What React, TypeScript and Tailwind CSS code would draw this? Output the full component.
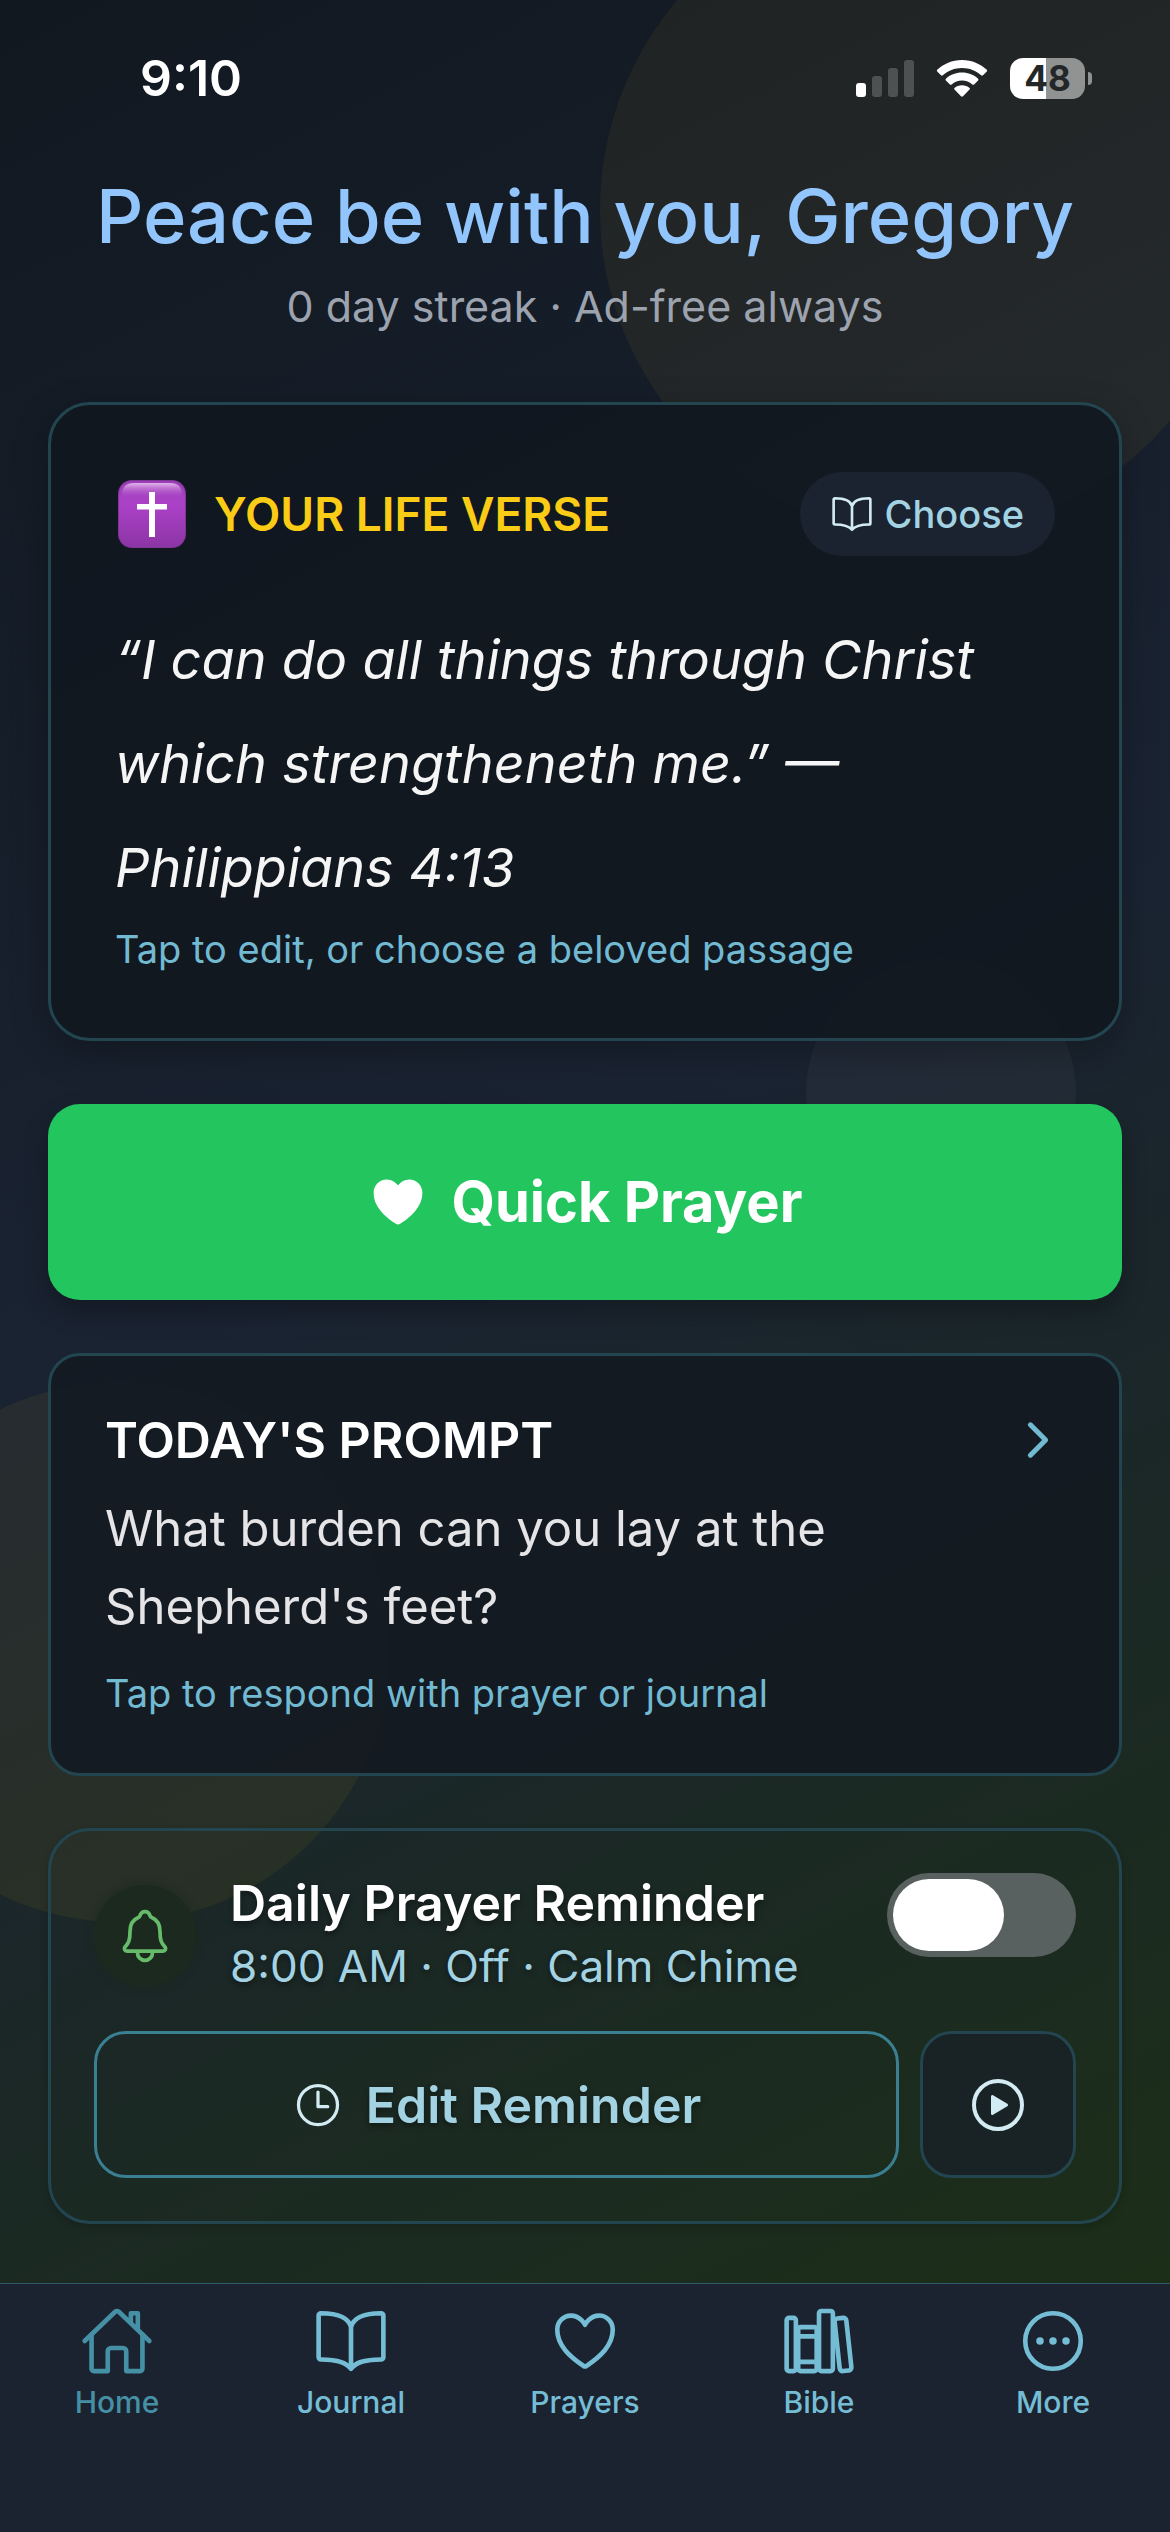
import { useState } from "react";
import type { IconType } from "react-icons";
import {
  IoBookOutline,
  IoChevronForward,
  IoEllipsisHorizontalCircleOutline,
  IoHeart,
  IoHeartOutline,
  IoHomeOutline,
  IoLibraryOutline,
  IoNotificationsOutline,
  IoPlayCircleOutline,
  IoTimeOutline,
} from "react-icons/io5";

interface Tab {
  label: string;
  icon: IconType;
}

const tabs: Tab[] = [
  { label: "Home", icon: IoHomeOutline },
  { label: "Journal", icon: IoBookOutline },
  { label: "Prayers", icon: IoHeartOutline },
  { label: "Bible", icon: IoLibraryOutline },
  { label: "More", icon: IoEllipsisHorizontalCircleOutline },
];

function StatusBar() {
  return (
    <div className="flex h-[156px] items-center justify-between pl-[140px] pr-[78px]">
      <span className="text-[50px] font-semibold leading-none text-white">9:10</span>
      <div className="flex items-center gap-[22px]">
        {/* Signal */}
        <svg viewBox="0 0 58 38" className="h-[38px] w-[58px]" aria-hidden="true">
          <rect x="0" y="24" width="10" height="14" rx="3" fill="#fff" />
          <rect x="16" y="17" width="10" height="21" rx="3" fill="#4d5152" />
          <rect x="32" y="9" width="10" height="29" rx="3" fill="#4d5152" />
          <rect x="48" y="1" width="10" height="37" rx="3" fill="#4d5152" />
        </svg>
        {/* Wi-Fi */}
        <svg viewBox="0 0 52 38" className="h-[38px] w-[52px]" aria-hidden="true" fill="#fff">
          <path d="M26 1C16 1 7.500 5 1.200 10.800Q.4 11.600 1.200 12.500L5 16.300Q5.900 17.100 6.800 16.300C12 11.600 18.600 8.900 26 8.900S40 11.600 45.200 16.300Q46.100 17.100 47 16.300L50.800 12.500Q51.600 11.600 50.800 10.800C44.500 5 36 1 26 1Z" />
          <path d="M26 13.600C19.600 13.600 14 16 9.900 19.700Q9 20.600 9.900 21.500L13.900 25.400Q14.800 26.200 15.700 25.400C18.500 23 22 21.500 26 21.500S33.500 23 36.300 25.400Q37.200 26.200 38.100 25.400L42.100 21.500Q43 20.600 42.100 19.700C38 16 32.400 13.600 26 13.600Z" />
          <path d="M26 26.200C23 26.200 20.400 27.200 18.500 28.900Q17.700 29.800 18.500 30.600L25 37.300Q26 38.200 27 37.300L33.500 30.600Q34.300 29.800 33.500 28.900C31.600 27.200 29 26.200 26 26.200Z" />
        </svg>
        {/* Battery */}
        <div className="flex items-center gap-[3px]">
          <div className="flex h-[41px] w-[75px] items-center justify-center rounded-[13px] bg-linear-to-r from-white from-48% to-[#919393] to-48%">
            <span className="text-[35px] font-bold leading-none text-[#232728]">48</span>
          </div>
          <div className="h-[13px] w-1 rounded-r-full bg-[#919393]" />
        </div>
      </div>
    </div>
  );
}

function CrossBadge() {
  return (
    <svg viewBox="0 0 68 68" className="size-[68px]" aria-hidden="true">
      <defs>
        <linearGradient id="badge" x1="0" y1="0" x2="0" y2="1">
          <stop offset="0" stopColor="#9a3fb5" />
          <stop offset="0.35" stopColor="#ac41c8" />
          <stop offset="1" stopColor="#8c35a5" />
        </linearGradient>
        <linearGradient id="shine" x1="0" y1="0" x2="0" y2="1">
          <stop offset="0" stopColor="#e3b5ec" />
          <stop offset="1" stopColor="#b04acb" stopOpacity="0" />
        </linearGradient>
      </defs>
      <rect width="68" height="68" rx="14" fill="#7f3496" />
      <rect x="1" y="1" width="66" height="66" rx="13" fill="url(#badge)" />
      <path d="M4 18V15Q4 3 16 3H52Q64 3 64 15V18Z" fill="url(#shine)" />
      <path d="M31 12H37V24H49V29.500H37V57H31V29.500H19V24H31Z" fill="#fff" />
    </svg>
  );
}

export default function App() {
  const [activeTab, setActiveTab] = useState("Home");
  const [reminderOn, setReminderOn] = useState(false);

  return (
    <div className="flex min-h-screen flex-col bg-[#1b2331] font-['Inter','Liberation_Sans',sans-serif]">
      <main className="relative isolate flex-1 overflow-hidden bg-[linear-gradient(153deg,#111820_0%,#1a2332_50%,#1c2e18_100%)] pb-[59px]">
        {/* Background circles */}
        <div className="absolute -top-[114px] left-[600px] -z-10 size-[648px] rounded-full bg-[#fbbf24]/6" />
        <div className="absolute left-[806px] top-[958px] -z-10 size-[270px] rounded-full bg-[#ffe4e6]/4" />
        <div className="absolute -left-[151px] top-[1382px] -z-10 size-[540px] rounded-full bg-[#facc15]/6" />

        <StatusBar />

        <header className="pt-4 text-center">
          <h1 className="text-[74px] font-medium leading-[88px] text-[#93c5fd]">Peace be with you, Gregory</h1>
          <p className="mt-4 text-[43px] leading-[60px] text-[#9ca3af]">0 day streak · Ad-free always</p>
        </header>

        <div className="mt-[66px] flex flex-col px-12">
          {/* Life verse */}
          <section className="rounded-[42px] border-3 border-[#22454f] bg-[#11171f]/90 px-16 pb-[62px] pt-[67px] shadow-[0_12px_36px_rgba(0,0,0,0.25)]">
            <div className="flex items-center justify-between">
              <div className="flex items-center gap-[28px] pl-[3px]">
                <CrossBadge />
                <h2 className="text-[46px] font-semibold leading-[60px] text-[#facc15]">YOUR LIFE VERSE</h2>
              </div>
              <button type="button" className="flex h-[84px] items-center gap-[12px] rounded-[42px] bg-[#1b2331] px-[31px] text-[#a3d3e3]">
                <IoBookOutline className="size-[42px] text-[#d3ebf2]" />
                <span className="text-[38px] font-medium leading-none">Choose</span>
              </button>
            </div>
            <p className="mt-[52px] text-[54px] italic leading-[104px] text-[#f5f5f5]">
              “I can do all things through Christ which strengtheneth me.” — Philippians 4:13
            </p>
            <p className="mt-[2px] text-[38px] leading-[54px] text-[#72b9d2]">Tap to edit, or choose a beloved passage</p>
          </section>

          <button
            type="button"
            className="mt-[63px] flex h-[196px] items-center justify-center gap-[24px] rounded-[32px] bg-[#22c55e] text-white shadow-[0_12px_24px_rgba(0,0,0,0.25)]"
          >
            <IoHeart className="size-[60px]" />
            <span className="text-[56px] font-bold leading-none">Quick Prayer</span>
          </button>

          {/* Prompt of the day */}
          <section className="mt-[53px] rounded-[32px] border-3 border-[#22454f] bg-[#131921]/90 px-[54px] pb-[53px] pt-[54px]">
            <div className="flex items-center justify-between">
              <h2 className="text-[50px] font-semibold leading-[60px] text-white">TODAY'S PROMPT</h2>
              <IoChevronForward className="size-[54px] text-[#72b9d2]" />
            </div>
            <p className="mt-[20px] text-[49px] leading-[78px] text-[#e5e5e8]">
              What burden can you lay at the
              <br />
              Shepherd's feet?
            </p>
            <p className="mt-[20px] text-[38px] leading-[54px] text-[#72b9d2]">Tap to respond with prayer or journal</p>
          </section>

          {/* Reminder */}
          <section className="mt-[52px] rounded-[42px] border-3 border-[#22454f] px-[43px] pb-[43px] pt-[42px] shadow-[0_3px_9px_rgba(0,0,0,0.2)] [text-shadow:0_3px_6px_rgba(0,0,0,0.4)]">
            <div className="flex items-start justify-between">
              <div className="flex items-center gap-[34px]">
                <div className="flex size-[102px] items-center justify-center rounded-full bg-[#1b291f] shadow-[0_0_9px_#1b291f]">
                  <IoNotificationsOutline className="size-[60px] text-[#66bb6a]" />
                </div>
                <div>
                  <h2 className="text-[50px] font-semibold leading-[60px] text-white">Daily Prayer Reminder</h2>
                  <p className="text-[44px] leading-[66px] text-[#a3d3e3]">8:00 AM · Off · Calm Chime</p>
                </div>
              </div>
              <label className="flex h-[84px] w-[189px] cursor-pointer rounded-full bg-[#596160] p-[6px] has-checked:justify-end has-checked:bg-[#22c55e]">
                <input
                  type="checkbox"
                  role="switch"
                  aria-label="Daily Prayer Reminder"
                  checked={reminderOn}
                  onChange={(e) => setReminderOn(e.target.checked)}
                  className="sr-only"
                />
                <span className="h-[72px] w-[111px] rounded-full bg-white" />
              </label>
            </div>
            <div className="mt-[32px] flex gap-[21px]">
              <button
                type="button"
                className="flex h-[147px] flex-1 items-center justify-center gap-[22px] rounded-[32px] border-3 border-[#3a7f92] text-[#a3d3e3] [text-shadow:inherit]"
              >
                <IoTimeOutline className="size-[52px] text-[#d3ebf2]" />
                <span className="text-[50px] font-semibold leading-[60px]">Edit Reminder</span>
              </button>
              <button
                type="button"
                aria-label="Play chime"
                className="flex h-[147px] w-[156px] items-center justify-center rounded-[32px] border-3 border-[#22454f] bg-[#192224]"
              >
                <IoPlayCircleOutline className="size-[64px] text-[#d3ebf2]" />
              </button>
            </div>
          </section>
        </div>
      </main>

      <nav className="grid grid-cols-5 border-t border-[#2f5c6b] pb-[112px] pt-[20px]">
        {tabs.map(({ label, icon: Icon }) => (
          <button
            key={label}
            type="button"
            onClick={() => setActiveTab(label)}
            className={`flex flex-col items-center gap-[6px] ${activeTab === label ? "text-[#4690a5]" : "text-[#75bdd5]"}`}
          >
            <Icon className="size-[74px]" />
            <span className="text-[30px] font-medium leading-[36px]">{label}</span>
          </button>
        ))}
      </nav>
    </div>
  );
}
